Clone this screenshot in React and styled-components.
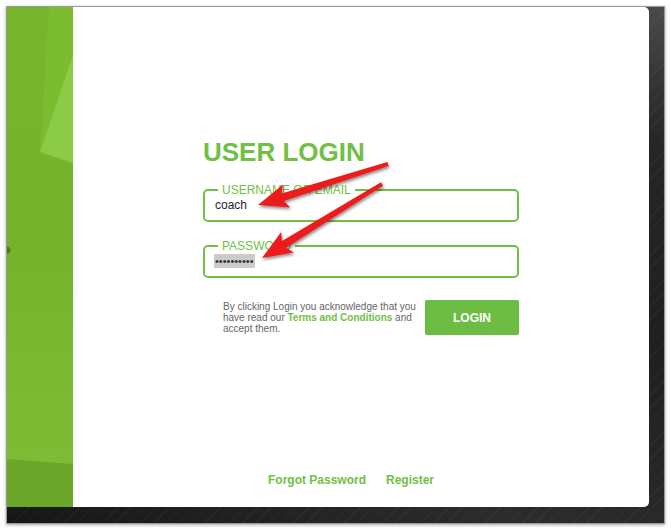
import React from 'react'
import styled, { createGlobalStyle } from 'styled-components'

const GREEN = '#71bf44'

const Global = createGlobalStyle`
  html, body {
    margin: 0;
    padding: 0;
    background: #ffffff;
    font-family: "Liberation Sans", Arial, sans-serif;
  }
`

const Page = styled.div`
  position: relative;
  width: 671px;
  height: 531px;
  overflow: hidden;
`

const Frame = styled.div`
  margin: 6px 0 0 6px;
  width: 657px;
  height: 516px;
  border: 1px solid #9a9a9a;
  box-shadow: 0 1px 3px rgba(0, 0, 0, 0.35);
  display: grid;
  grid-template-rows: 500px 16px;
  background:
    repeating-linear-gradient(135deg, rgba(255,255,255,0.04) 0 1px, transparent 1px 9px),
    linear-gradient(200deg, #4a4a4a 0%, #262626 18%, #1f1f1f 45%, #2c2c2c 75%, #161616 100%);
`

const Screen = styled.div`
  display: flex;
`

const Strip = styled.div`
  width: 66px;
  flex: none;
  background: linear-gradient(180deg, #77b62c 0%, #74b22b 45%, #7cba32 80%, #81bd38 100%);
  svg { display: block; }
`

const Panel = styled.div`
  width: 576px;
  flex: none;
  background: #ffffff;
  border-radius: 0 5px 5px 0;
  display: flex;
  flex-direction: column;
  align-items: center;
  padding-top: 132px;
  box-sizing: border-box;
`

const Form = styled.form`
  width: 316px;
  margin: 0;
`

const Title = styled.h1`
  margin: 0 0 19px;
  font-size: 26px;
  line-height: 26px;
  font-weight: bold;
  color: ${GREEN};
`

const Field = styled.fieldset`
  margin: ${p => (p.$first ? '0' : '18px 0 0')};
  padding: 0 10px 6px;
  border: 2px solid ${GREEN};
  border-radius: 5px;
`

const Legend = styled.legend`
  margin-left: 3px;
  padding: 0 4px;
  font-size: 12px;
  line-height: 12px;
  color: ${GREEN};
`

const Value = styled.div`
  height: 18px;
  display: flex;
  align-items: center;
  font-size: 12px;
  color: #1e1e1e;
`

const Selected = styled.span`
  display: inline-block;
  margin-left: -1px;
  padding: 0 1px;
  height: 14px;
  line-height: 14px;
  font-size: 11px;
  background: #cbcbcb;
  color: #333;
`

const ActionRow = styled.div`
  margin-top: 22px;
  display: flex;
  align-items: center;
  justify-content: space-between;
`

const Terms = styled.p`
  margin: 0 0 0 20px;
  width: 196px;
  font-size: 10px;
  line-height: 11px;
  color: #666666;
`

const TermsLink = styled.a`
  color: ${GREEN};
  font-weight: bold;
  text-decoration: none;
`

const LoginButton = styled.button`
  width: 94px;
  height: 35px;
  border: none;
  border-radius: 2px;
  background: #6dbd44;
  color: #ffffff;
  font-family: inherit;
  font-size: 12px;
  font-weight: bold;
  padding: 0;
`

const Footer = styled.div`
  margin-top: auto;
  padding: 0 20px 20px 0;
  display: flex;
  gap: 20px;
`

const FooterLink = styled.a`
  font-size: 12px;
  line-height: 14px;
  font-weight: bold;
  color: ${GREEN};
  text-decoration: none;
`

const Overlay = styled.svg`
  position: absolute;
  top: 0;
  left: 0;
  pointer-events: none;
`

function arrowPoints(x1, y1, x2, y2, w0 = 4, w1 = 8, hl = 30, hw = 12) {
  const dx = x2 - x1
  const dy = y2 - y1
  const len = Math.hypot(dx, dy)
  const ux = dx / len
  const uy = dy / len
  const nx = -uy
  const ny = ux
  const bx = x2 - ux * hl
  const by = y2 - uy * hl
  const nb = 4
  const pts = [
    [x1 + nx * w0 / 2, y1 + ny * w0 / 2],
    [bx + ux * nb + nx * w1 / 2, by + uy * nb + ny * w1 / 2],
    [bx + nx * hw, by + ny * hw],
    [x2, y2],
    [bx - nx * hw, by - ny * hw],
    [bx + ux * nb - nx * w1 / 2, by + uy * nb - ny * w1 / 2],
    [x1 - nx * w0 / 2, y1 - ny * w0 / 2],
  ]
  return pts.map(p => p[0].toFixed(1) + ',' + p[1].toFixed(1)).join(' ')
}

function StripArt() {
  return (
    <svg width="66" height="500" viewBox="0 0 66 500">
      <polygon points="42,0 66,0 66,48 33,145" fill="#7bbd2e" />
      <polygon points="66,48 33,145 66,156" fill="#8ccb45" />
      <polygon points="0,452 66,457 66,500 0,500" fill="#6ba62a" />
      <circle cx="0" cy="243" r="3.5" fill="#3f5f22" opacity="0.7" />
    </svg>
  )
}

function Arrows() {
  return (
    <Overlay width="671" height="531" viewBox="0 0 671 531">
      <defs>
        <filter id="shadow" x="-20%" y="-20%" width="140%" height="140%">
          <feDropShadow dx="1" dy="2" stdDeviation="1.6" floodColor="#000" floodOpacity="0.45" />
        </filter>
      </defs>
      <g filter="url(#shadow)" fill="#ec1c1c">
        <polygon points={arrowPoints(388, 164, 258, 205)} />
        <polygon points={arrowPoints(382, 184, 262, 258)} />
      </g>
    </Overlay>
  )
}

export default function App() {
  return (
    <Page>
      <Global />
      <Frame>
        <Screen>
          <Strip>
            <StripArt />
          </Strip>
          <Panel>
            <Form onSubmit={e => e.preventDefault()}>
              <Title>USER LOGIN</Title>
              <Field $first>
                <Legend>USERNAME OR EMAIL</Legend>
                <Value>coach</Value>
              </Field>
              <Field>
                <Legend>PASSWORD</Legend>
                <Value>
                  <Selected>••••••••••</Selected>
                </Value>
              </Field>
              <ActionRow>
                <Terms>
                  By clicking Login you acknowledge that you have read our{' '}
                  <TermsLink href="#">Terms and Conditions</TermsLink> and accept them.
                </Terms>
                <LoginButton type="submit">LOGIN</LoginButton>
              </ActionRow>
            </Form>
            <Footer>
              <FooterLink href="#">Forgot Password</FooterLink>
              <FooterLink href="#">Register</FooterLink>
            </Footer>
          </Panel>
        </Screen>
      </Frame>
      <Arrows />
    </Page>
  )
}
